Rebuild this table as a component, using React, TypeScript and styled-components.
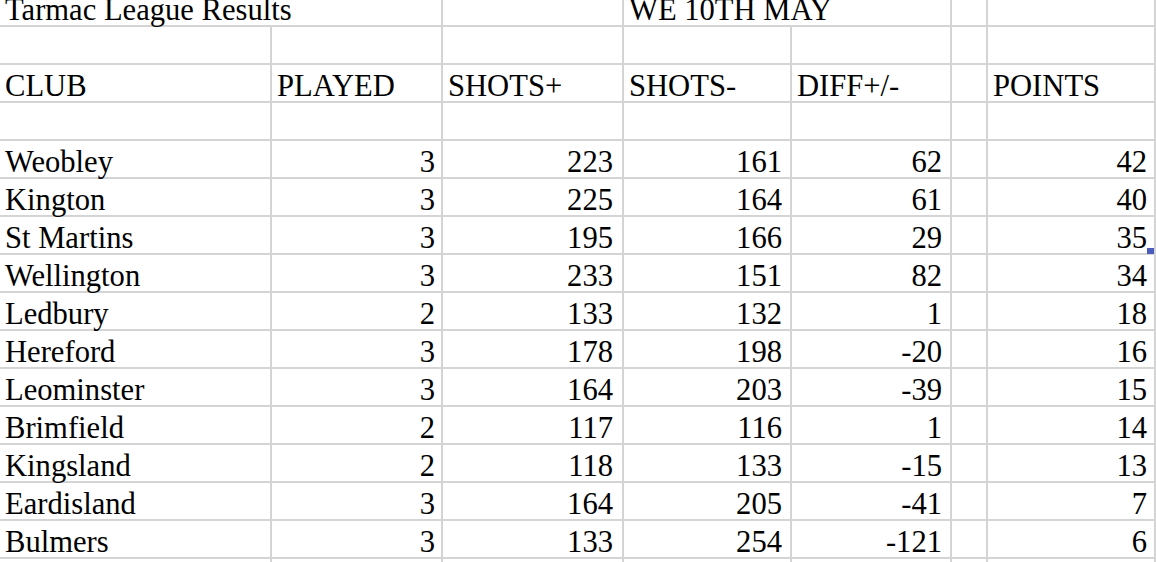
import React from 'react';
import styled, { createGlobalStyle } from 'styled-components';

const GlobalStyle = createGlobalStyle`
  html, body {
    margin: 0;
    padding: 0;
    background: #ffffff;
    overflow: hidden;
  }
`;

const Sheet = styled.div`
  width: 1156px;
  height: 562px;
  overflow: hidden;
  background: #ffffff;
`;

const Grid = styled.div`
  display: grid;
  grid-template-columns: 272px 171px 181px 168px 160px 36px 168px;
  grid-auto-rows: 38px;
  margin-top: -11px;
`;

const Cell = styled.div<{ $align?: 'left' | 'right'; $flow?: boolean; $pr?: number }>`
  position: relative;
  box-sizing: border-box;
  display: flex;
  align-items: flex-end;
  justify-content: ${(p) => (p.$align === 'right' ? 'flex-end' : 'flex-start')};
  padding: 0 ${(p) => p.$pr ?? 8}px 0 5px;
  border-bottom: 2px solid #d4d4d4;
  border-right: ${(p) => (p.$flow ? 'none' : '2px solid #d4d4d4')};
  font-family: 'Liberation Serif', 'Times New Roman', serif;
  font-size: 30.6px;
  line-height: 30px;
  color: #000000;
  white-space: nowrap;
  overflow: visible;
`;

const Handle = styled.span`
  position: absolute;
  right: 0;
  bottom: -1px;
  width: 7px;
  height: 6px;
  background: #4b5cbc;
`;

type Row = [string, number, number, number, number, number];

const results: Row[] = [
  ['Weobley', 3, 223, 161, 62, 42],
  ['Kington', 3, 225, 164, 61, 40],
  ['St Martins', 3, 195, 166, 29, 35],
  ['Wellington', 3, 233, 151, 82, 34],
  ['Ledbury', 2, 133, 132, 1, 18],
  ['Hereford', 3, 178, 198, -20, 16],
  ['Leominster', 3, 164, 203, -39, 15],
  ['Brimfield', 2, 117, 116, 1, 14],
  ['Kingsland', 2, 118, 133, -15, 13],
  ['Eardisland', 3, 164, 205, -41, 7],
  ['Bulmers', 3, 133, 254, -121, 6],
];

const EmptyRow = () => (
  <>
    {Array.from({ length: 7 }).map((_, i) => (
      <Cell key={i} />
    ))}
  </>
);

export default function App() {
  return (
    <Sheet>
      <GlobalStyle />
      <Grid>
        <Cell $flow>Tarmac League Results</Cell>
        <Cell />
        <Cell />
        <Cell $flow>WE 10TH MAY</Cell>
        <Cell />
        <Cell />
        <Cell />

        <EmptyRow />

        <Cell>CLUB</Cell>
        <Cell>PLAYED</Cell>
        <Cell>SHOTS+</Cell>
        <Cell>SHOTS-</Cell>
        <Cell>DIFF+/-</Cell>
        <Cell />
        <Cell>POINTS</Cell>

        <EmptyRow />

        {results.map(([club, played, plus, minus, diff, points]) => (
          <React.Fragment key={club}>
            <Cell>{club}</Cell>
            <Cell $align="right" $pr={6}>{played}</Cell>
            <Cell $align="right" $pr={9}>{plus}</Cell>
            <Cell $align="right">{minus}</Cell>
            <Cell $align="right">{diff}</Cell>
            <Cell />
            <Cell $align="right" $pr={7}>
              {points}
              {club === 'St Martins' && <Handle />}
            </Cell>
          </React.Fragment>
        ))}

        <EmptyRow />
      </Grid>
    </Sheet>
  );
}
